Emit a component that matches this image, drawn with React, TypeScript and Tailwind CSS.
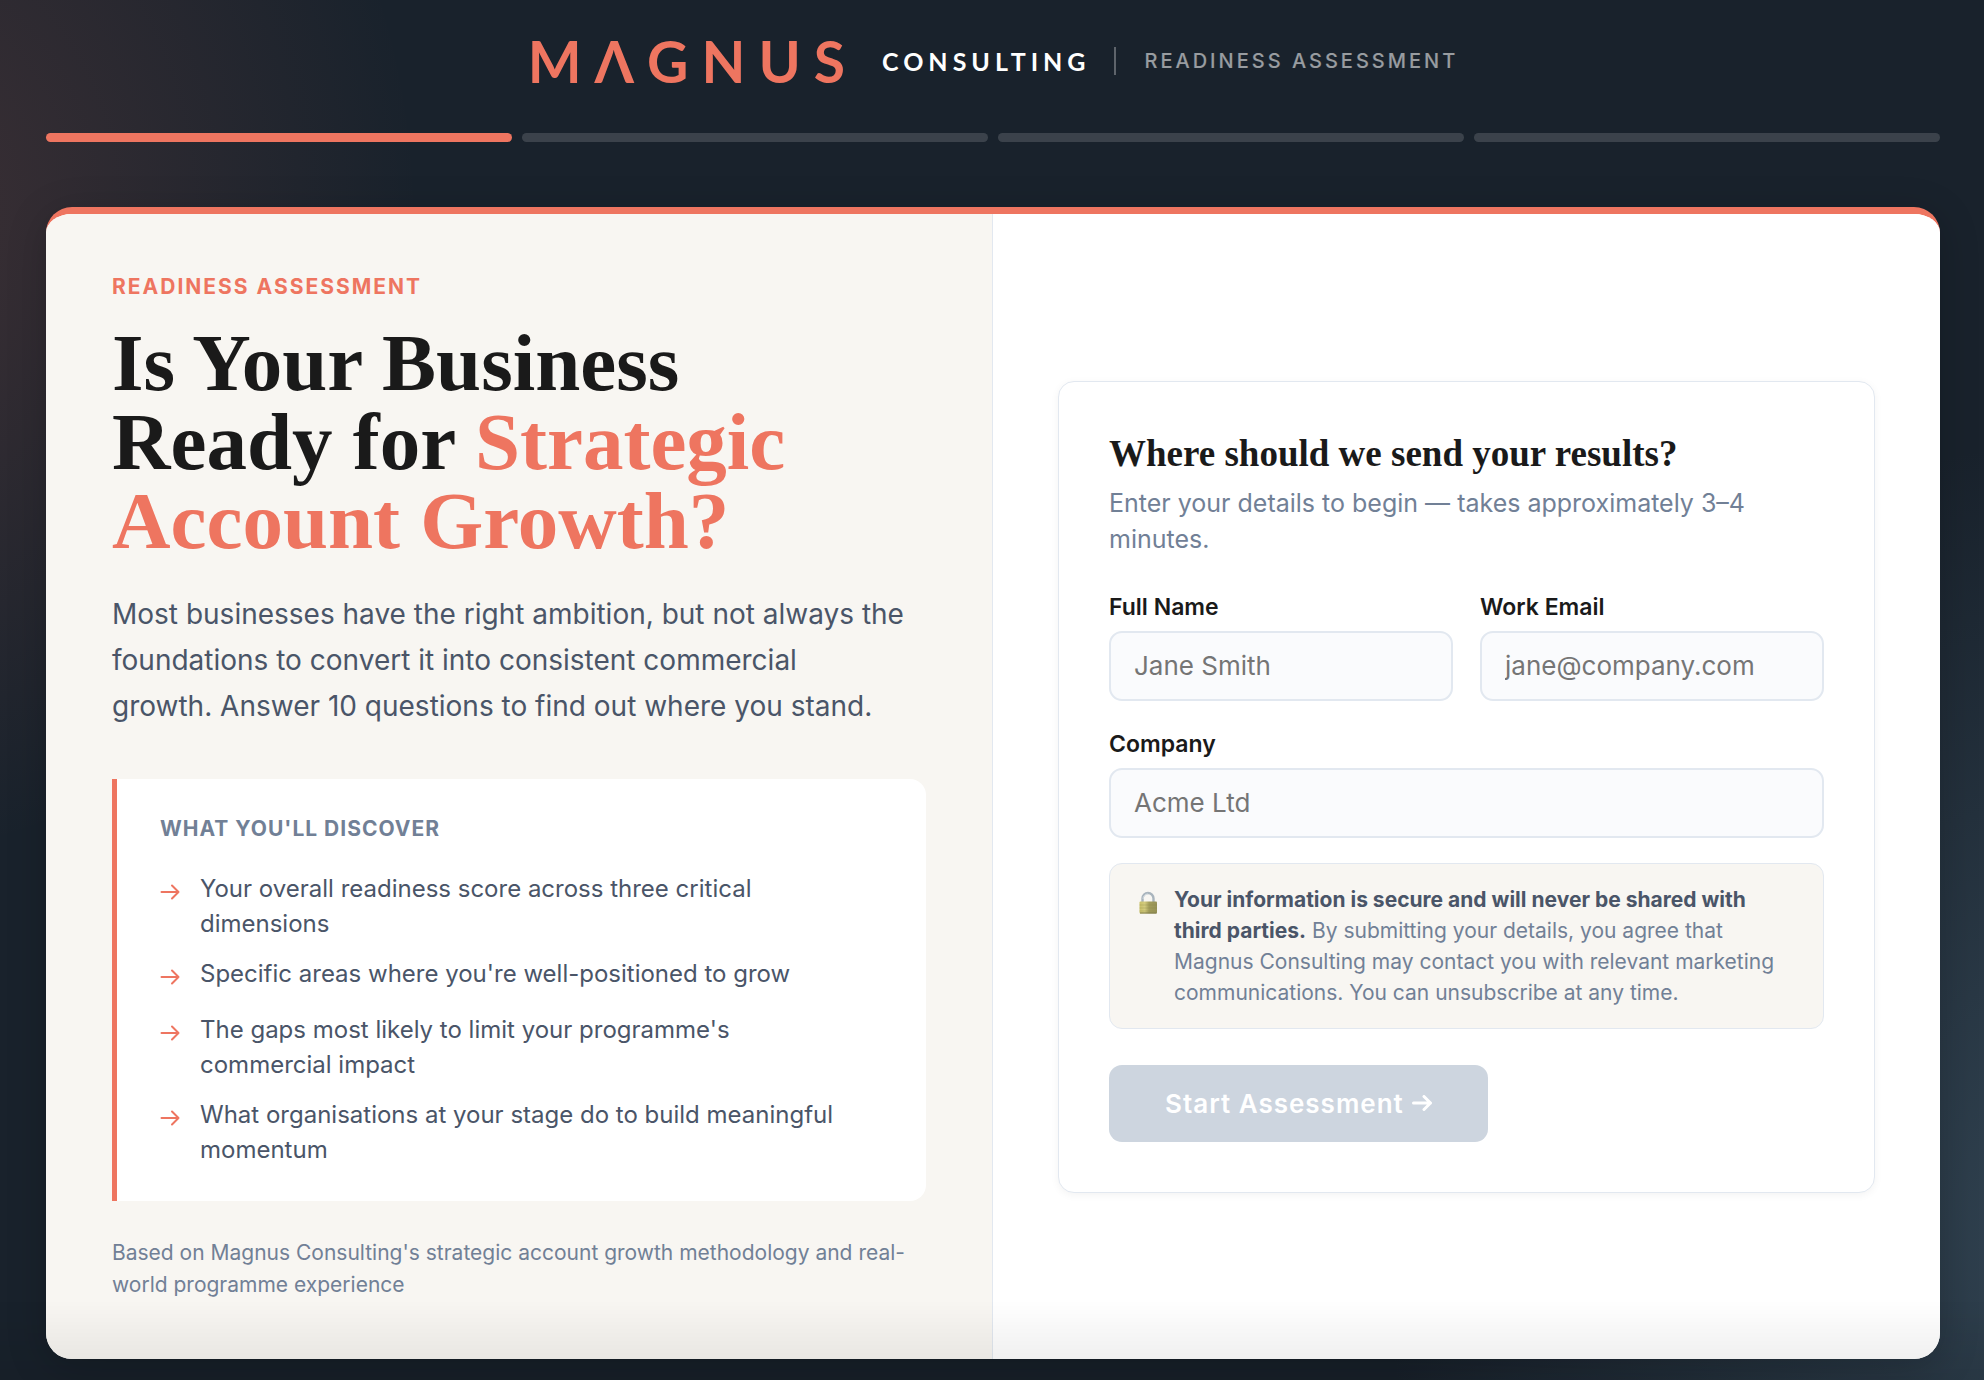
import { useState } from "react";

const STEPS = ["Details", "Foundations", "Capability", "Results"];

const DISCOVERIES = [
  "Your overall readiness score across three critical\ndimensions",
  "Specific areas where you're well-positioned to grow",
  "The gaps most likely to limit your programme's\ncommercial impact",
  "What organisations at your stage do to build meaningful\nmomentum",
];

function ArrowIcon({ strokeWidth = 2 }: { strokeWidth?: number }) {
  return (
    <svg width="20" height="16" viewBox="0 0 20 16" fill="none" stroke="currentColor" strokeWidth={strokeWidth} strokeLinecap="round" strokeLinejoin="round" aria-hidden="true">
      <path d="M1.5 8h17M12 1.5 18.500 8l-6.500 6.500" />
    </svg>
  );
}

function LockIcon() {
  return (
    <svg width="20" height="24" viewBox="0 0 20 24" aria-hidden="true">
      <defs>
        <linearGradient id="lock-body" x1="0" x2="1" y1="0" y2="0">
          <stop offset="0" stopColor="#c9c069" />
          <stop offset="0.3" stopColor="#d3cb7d" />
          <stop offset="0.55" stopColor="#a39d5b" />
          <stop offset="1" stopColor="#979258" />
        </linearGradient>
      </defs>
      <path d="M4.500 12V7.500a5.500 5.500 0 0 1 11 0V12" fill="none" stroke="#a9b4bd" strokeWidth="2.400" />
      <path d="M5 8a5 5 0 0 1 5-5" fill="none" stroke="#d7dee4" strokeWidth="1" />
      <rect x="1.500" y="10.500" width="17.500" height="12" rx="1" fill="url(#lock-body)" />
      <path d="M1.500 14h17.500M1.500 17h17.500M1.500 20h17.500" stroke="#8c8647" strokeWidth="0.600" opacity="0.500" />
      <path d="M2 22h16.500" stroke="#7f7a48" strokeWidth="1" />
    </svg>
  );
}

function Header() {
  return (
    <header className="flex h-[122px] items-center justify-center">
      <a href="#" aria-label="MAGNUS Consulting" className="flex items-center">
        <span className="font-['Lato'] text-[57px] leading-none font-bold tracking-[13px] text-[#ee7560]">MΛGNUS</span>
        <span className="ml-6 font-['Lato'] text-[25px] leading-none font-bold tracking-[5px] text-white">CONSULTING</span>
      </a>
      <span className="ml-6 h-7 w-[2px] bg-white/30" />
      <span className="ml-7 text-xl leading-6 font-medium tracking-[3px] text-white/55">READINESS ASSESSMENT</span>
    </header>
  );
}

function ProgressBar({ current }: { current: number }) {
  return (
    <ol className="mt-[11px] flex gap-[10px]" aria-label="Progress">
      {STEPS.map((step, index) => (
        <li key={step} aria-label={step} className={index <= current ? "h-[9px] flex-1 rounded-full bg-[#ee7560]" : "h-[9px] flex-1 rounded-full bg-white/15"} />
      ))}
    </ol>
  );
}

function Intro() {
  return (
    <section className="border-r border-[#e2e8f0] bg-[#f8f6f2] px-[66px] pt-[59px] pb-[58px]">
      <p className="text-[21px] leading-7 font-bold tracking-[2px] text-[#ee7560]">READINESS ASSESSMENT</p>
      <h1 className="mt-[23px] font-['Liberation_Serif',serif] text-[81px] leading-[79px] font-bold text-[#1a1a1a]">
        Is Your Business
        <br />
        Ready for <span className="text-[#ee7560]">Strategic Account Growth?</span>
      </h1>
      <p className="mt-[30px] text-[28px] leading-[46px] text-[#4a5568]">
        Most businesses have the right ambition, but not always the foundations to convert it into consistent commercial
        <br />
        growth. Answer 10 questions to find out where you stand.
      </p>

      <div className="mt-[50px] rounded-r-2xl border-l-[5px] border-[#ee7560] bg-white px-[43px] pt-9 pb-[34px]">
        <h2 className="text-[21px] leading-7 font-bold tracking-[1px] text-[#718096]">WHAT YOU'LL DISCOVER</h2>
        <ul className="mt-7 space-y-[15px]">
          {DISCOVERIES.map((item) => (
            <li key={item} className="flex min-h-[41px] gap-5 text-2xl leading-[35px] text-[#4a5568]">
              <span className="flex h-[41px] shrink-0 items-center text-[#ee7560]">
                <ArrowIcon />
              </span>
              <span className="whitespace-pre-line">{item}</span>
            </li>
          ))}
        </ul>
      </div>

      <p className="mt-9 text-[21px] leading-8 text-[#718096]">
        Based on Magnus Consulting's strategic account growth methodology and real-world programme experience
      </p>
    </section>
  );
}

type FieldProps = {
  id: string;
  label: string;
  type?: string;
  placeholder: string;
  value: string;
  onChange: (value: string) => void;
};

function Field({ id, label, type = "text", placeholder, value, onChange }: FieldProps) {
  return (
    <div className="min-w-0">
      <label htmlFor={id} className="block text-[23px] leading-7 font-semibold text-[#1a1a1a]">
        {label}
      </label>
      <input
        id={id}
        type={type}
        placeholder={placeholder}
        value={value}
        onChange={(event) => onChange(event.target.value)}
        className="mt-[10px] block h-[70px] w-full rounded-[13px] border-2 border-[#e2e8f0] bg-[#fafbfd] px-[23px] text-[26px] text-[#1a1a1a] placeholder:text-[#757575]"
      />
    </div>
  );
}

function DetailsForm() {
  const [name, setName] = useState("");
  const [email, setEmail] = useState("");
  const [company, setCompany] = useState("");
  const isComplete = Boolean(name && email && company);

  return (
    <section className="flex flex-col justify-center bg-white px-[65px]">
      <form onSubmit={(event) => event.preventDefault()} className="rounded-2xl border border-[#e2e8f0] bg-white p-[50px] shadow-[0_2px_8px_rgba(0,0,0,0.05)]">
        <h2 className="font-['Liberation_Serif',serif] text-[37px] leading-[44px] font-bold text-[#1a1a1a]">Where should we send your results?</h2>
        <p className="mt-[9px] text-[25px] leading-9 text-[#718096]">Enter your details to begin — takes approximately 3–4 minutes.</p>

        <div className="mt-9 grid grid-cols-2 gap-x-[27px]">
          <Field id="full-name" label="Full Name" placeholder="Jane Smith" value={name} onChange={setName} />
          <Field id="work-email" label="Work Email" type="email" placeholder="jane@company.com" value={email} onChange={setEmail} />
        </div>
        <div className="mt-[29px]">
          <Field id="company" label="Company" placeholder="Acme Ltd" value={company} onChange={setCompany} />
        </div>

        <div className="mt-[25px] flex gap-4 rounded-[13px] border border-[#e2e8f0] bg-[#f8f6f2] px-7 py-5">
          <span className="mt-[7px] shrink-0">
            <LockIcon />
          </span>
          <p className="text-[21px] leading-[31px] text-[#718096]">
            <strong className="font-bold text-[#4a5568]">Your information is secure and will never be shared with third parties.</strong> By submitting your details, you agree that Magnus Consulting may contact you with relevant marketing communications. You can unsubscribe at any time.
          </p>
        </div>

        <button type="submit" disabled={!isComplete} className="mt-9 flex h-[77px] items-center gap-2 rounded-[13px] bg-[#ee7560] px-14 text-[26px] font-semibold tracking-[1px] text-white disabled:bg-[#cdd5df]">
          Start Assessment
          <ArrowIcon strokeWidth={3} />
        </button>
      </form>
    </section>
  );
}

export default function App() {
  return (
    <div className="min-h-screen bg-[#19222c] bg-[radial-gradient(ellipse_540px_640px_at_-120px_220px,rgba(238,117,96,0.17),transparent),radial-gradient(ellipse_700px_800px_at_calc(100%_+_100px)_1240px,rgba(74,101,120,0.5),transparent)] font-['Inter',sans-serif]">
      <div className="pr-11 pb-[21px] pl-[46px]">
        <Header />
        <ProgressBar current={0} />
        <main className="mt-[65px] grid grid-cols-2 overflow-hidden rounded-[26px] border-t-[7px] border-[#ee7560] bg-white shadow-[0_8px_40px_rgba(0,0,0,0.2)]">
          <Intro />
          <DetailsForm />
        </main>
      </div>
      <div className="pointer-events-none fixed inset-x-0 bottom-0 h-20 bg-linear-to-t from-black/8 to-transparent" />
    </div>
  );
}
